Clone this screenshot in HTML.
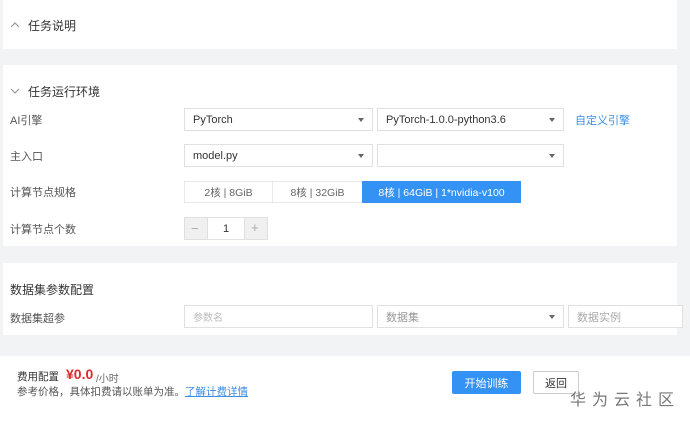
<!DOCTYPE html>
<html><head><meta charset="utf-8"><style>
*{margin:0;padding:0;box-sizing:border-box}
body{width:690px;height:421px;background:#f2f3f5;font-family:"Liberation Sans","Noto Sans CJK SC",sans-serif;font-size:11px;color:#333;position:relative;overflow:hidden}
.a{position:absolute}
.p{position:absolute;left:3px;width:674px;background:#fff}
.box{position:absolute;border:1px solid #e0e0e0;background:#fff;height:23px;display:flex;align-items:center;padding-left:8px;font-size:11px;color:#333}
.arr{position:absolute;right:8px;top:9px;width:0;height:0;border-left:3.5px solid transparent;border-right:3.5px solid transparent;border-top:4px solid #666}
.lbl{position:absolute;left:10px;font-size:11px;color:#555}
.seg{position:absolute;top:181px;height:22px;display:flex;align-items:center;justify-content:center;border:1px solid #e8e8e8;color:#666;font-size:10.5px}
</style></head><body>
<div class="p" style="top:0;height:49px"></div>
<div class="p" style="top:65px;height:181px"></div>
<div class="p" style="top:263px;height:72px"></div>
<div class="a" style="left:0;top:356px;width:690px;height:65px;background:#fff"></div>

<svg class="a" style="left:10px;top:21px" width="10" height="8"><path d="M1 6 L5 2 L9 6" stroke="#999" fill="none" stroke-width="1.2"/></svg>
<div class="a" style="left:28px;top:17px;font-size:12px;color:#333">任务说明</div>
<svg class="a" style="left:10px;top:87px" width="10" height="8"><path d="M1 2 L5 6 L9 2" stroke="#999" fill="none" stroke-width="1.2"/></svg>
<div class="a" style="left:28px;top:83px;font-size:12px;color:#333">任务运行环境</div>

<div class="lbl" style="top:112px">AI引擎</div>
<div class="box" style="left:184px;top:108px;width:189px">PyTorch<i class="arr"></i></div>
<div class="box" style="left:377px;top:108px;width:187px">PyTorch-1.0.0-python3.6<i class="arr"></i></div>
<div class="a" style="left:575px;top:112px;color:#3a8ee6">自定义引擎</div>

<div class="lbl" style="top:148px">主入口</div>
<div class="box" style="left:184px;top:144px;width:189px">model.py<i class="arr"></i></div>
<div class="box" style="left:377px;top:144px;width:187px"><i class="arr"></i></div>

<div class="lbl" style="top:184px">计算节点规格</div>
<div class="seg" style="left:184px;width:89px">2核 | 8GiB</div>
<div class="seg" style="left:272px;width:91px">8核 | 32GiB</div>
<div class="seg" style="left:362px;width:159px;background:#3592f5;border-color:#3592f5;color:#fff">8核 | 64GiB | 1*nvidia-v100</div>

<div class="lbl" style="top:221px">计算节点个数</div>
<div class="a" style="left:184px;top:217px;width:84px;height:23px;border:1px solid #e0e0e0;background:#f0f0f0"></div>
<div class="a" style="left:207px;top:217px;width:38px;height:23px;background:#fff;border:1px solid #e0e0e0;display:flex;align-items:center;justify-content:center">1</div>
<div class="a" style="left:191px;top:221px;color:#aaa;font-size:13px">−</div>
<div class="a" style="left:251px;top:220px;color:#aaa;font-size:13px">+</div>

<div class="a" style="left:10px;top:281px;font-size:12px;color:#333">数据集参数配置</div>
<div class="lbl" style="top:310px">数据集超参</div>
<div class="box" style="left:184px;top:305px;width:189px;color:#bbb;font-size:10px">参数名</div>
<div class="box" style="left:377px;top:305px;width:187px;color:#999">数据集<i class="arr"></i></div>
<div class="box" style="left:568px;top:305px;width:115px;color:#aaa">数据实例</div>

<div class="a" style="left:17px;top:369px;font-size:10.5px;color:#333">费用配置</div>
<div class="a" style="left:66px;top:366px;font-size:14px;font-weight:bold;color:#e4262b">¥0.0</div>
<div class="a" style="left:96px;top:370px;font-size:10px;color:#666">/小时</div>
<div class="a" style="left:17px;top:384px;font-size:10.5px;color:#555">参考价格，具体扣费请以账单为准。<span style="color:#3a8ee6;text-decoration:underline">了解计费详情</span></div>
<div class="a" style="left:452px;top:371px;width:69px;height:23px;background:#3592f5;color:#fff;display:flex;align-items:center;justify-content:center;border-radius:2px">开始训练</div>
<div class="a" style="left:533px;top:371px;width:46px;height:23px;border:1px solid #ccc;display:flex;align-items:center;justify-content:center;background:#fff;border-radius:2px">返回</div>
<div class="a" style="left:570px;top:386px;font-size:16px;color:#777;letter-spacing:6px">华为云社区</div>
</body></html>
